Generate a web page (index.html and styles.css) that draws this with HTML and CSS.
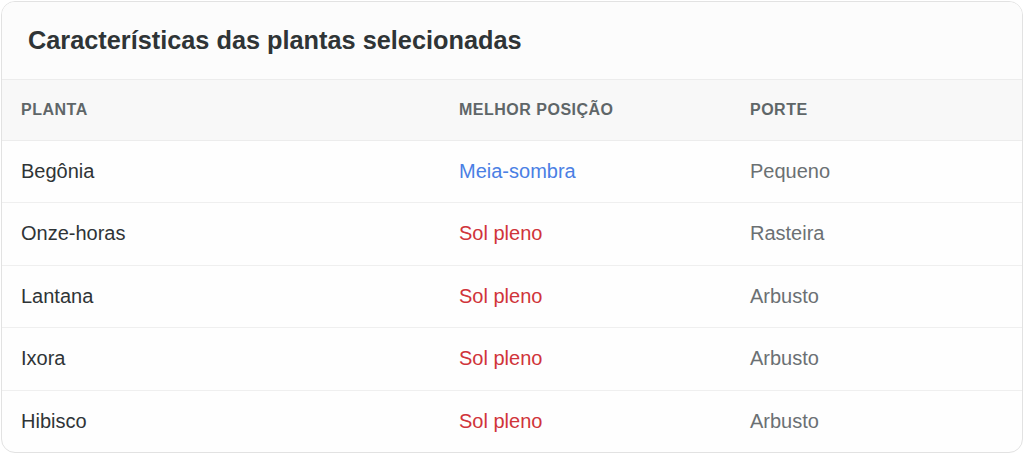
FILE: index.html
```html
<!DOCTYPE html>
<html lang="pt">
<head>
<meta charset="utf-8">
<title>Características das plantas selecionadas</title>
<link rel="stylesheet" href="styles.css">
</head>
<body>
<section class="card">
  <header class="card-header">
    <h1 class="card-title">Características das plantas selecionadas</h1>
  </header>
  <table class="plants">
    <thead>
      <tr>
        <th class="col-name">Planta</th>
        <th class="col-pos">Melhor posição</th>
        <th class="col-size">Porte</th>
      </tr>
    </thead>
    <tbody>
      <tr><td>Begônia</td><td class="pos shade">Meia-sombra</td><td class="size">Pequeno</td></tr>
      <tr><td>Onze-horas</td><td class="pos sun">Sol pleno</td><td class="size">Rasteira</td></tr>
      <tr><td>Lantana</td><td class="pos sun">Sol pleno</td><td class="size">Arbusto</td></tr>
      <tr><td>Ixora</td><td class="pos sun">Sol pleno</td><td class="size">Arbusto</td></tr>
      <tr><td>Hibisco</td><td class="pos sun">Sol pleno</td><td class="size">Arbusto</td></tr>
    </tbody>
  </table>
</section>
</body>
</html>
```

FILE: styles.css
```css
* { box-sizing: border-box; }

html, body {
  margin: 0;
  padding: 0;
  background: #ffffff;
}

body {
  padding: 1px;
  font-family: "Liberation Sans", Arial, Helvetica, sans-serif;
}

.card {
  width: 1022px;
  height: 452px;
  border: 1px solid #e2e2e2;
  border-radius: 14px;
  background: #fefefe;
  overflow: hidden;
}

.card-header {
  height: 78px;
  background: #fcfcfc;
  border-bottom: 1px solid #ececec;
  display: flex;
  align-items: center;
  padding-left: 26px;
}

.card-title {
  margin: 0;
  font-size: 25.3px;
  font-weight: 700;
  color: #2f3436;
}

.plants {
  width: 100%;
  border-collapse: collapse;
  table-layout: fixed;
}

.plants th {
  height: 60px;
  background: #f8f8f8;
  text-align: left;
  font-size: 16px;
  font-weight: 700;
  letter-spacing: 0.5px;
  text-transform: uppercase;
  color: #5f6668;
  border-bottom: 1px solid #ececec;
  padding: 0 0 0 19px;
}

.col-name { width: 438px; }
.col-pos { width: 291px; }

.plants td {
  height: 62.5px;
  padding: 0 0 0 19px;
  font-size: 20px;
  color: #2f3436;
  border-bottom: 1px solid #efefef;
}

.plants tbody tr:last-child td { border-bottom: none; }

.plants td.shade { color: #4a7fe4; }
.plants td.sun { color: #d0343a; }
.plants td.size { color: #6b7073; }
```
